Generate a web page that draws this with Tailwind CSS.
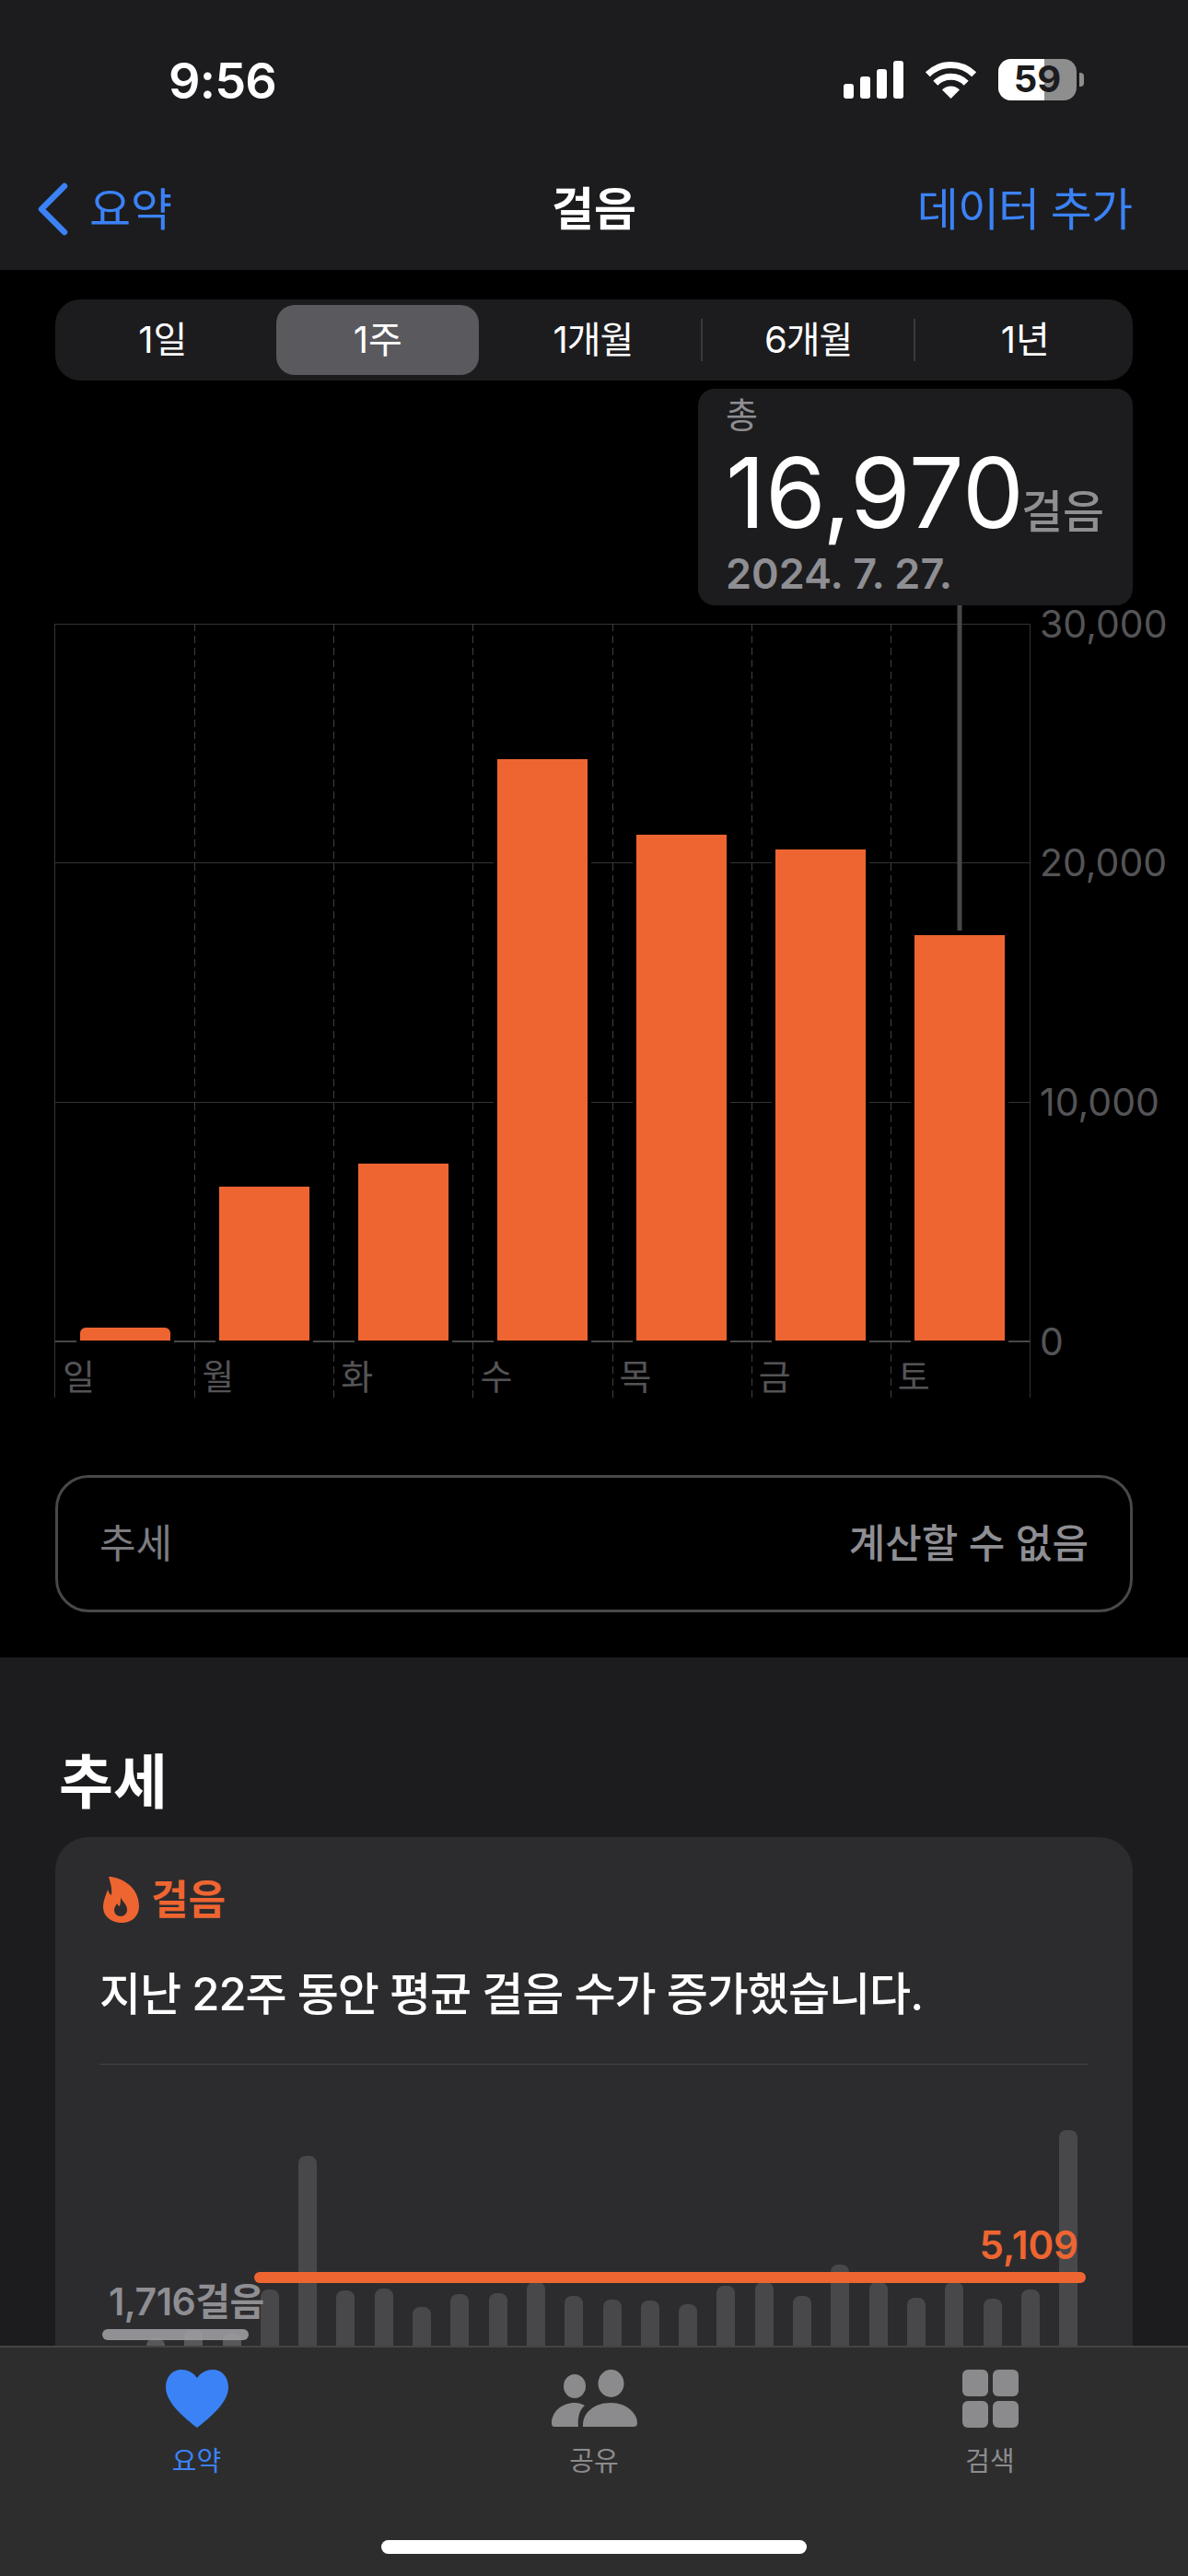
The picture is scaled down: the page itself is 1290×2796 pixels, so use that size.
<!DOCTYPE html>
<html lang="ko">
<head>
  <meta charset="UTF-8">
  <meta name="viewport" content="width=device-width, initial-scale=1.0">
  <title>걸음</title>
  <script src="https://cdn.jsdelivr.net/npm/@tailwindcss/browser@4"></script>
</head>
<body class="bg-black">
<div class="relative w-[1290px] h-[2796px] overflow-hidden bg-[#1c1c1e] text-white font-['Inter','Noto_Sans_CJK_KR',sans-serif]">

  <!-- status + nav -->
  <header class="h-[293px] bg-[#1c1c1e]">
    <div class="h-[172px] flex items-center justify-between pl-[183px] pr-[113px]">
      <span class="pt-[4px] text-[54px] leading-none font-semibold tracking-[-0.8px]">9:56</span>
      <div class="flex items-center">
        <div class="flex items-end gap-[7px] h-[41px]">
          <div class="w-[11px] h-[16px] rounded-[3px] bg-white"></div>
          <div class="w-[11px] h-[24px] rounded-[3px] bg-white"></div>
          <div class="w-[11px] h-[32px] rounded-[3px] bg-white"></div>
          <div class="w-[11px] h-[41px] rounded-[3px] bg-white"></div>
        </div>
        <svg class="ml-[23px]" width="57" height="42" viewBox="0 0 57 42" fill="none">
          <path d="M3.3 15.8A36 36 0 0 1 53.7 15.8" stroke="#fff" stroke-width="7"/>
          <path d="M11.8 25.3A23.5 23.5 0 0 1 45.2 25.3" stroke="#fff" stroke-width="7"/>
          <path d="M28.5 42L19 32.5A13.4 13.4 0 0 1 38 32.5Z" fill="#fff"/>
        </svg>
        <div class="relative ml-[23px] w-[85px] h-[45px] rounded-[14px] bg-[#8e8e8e] flex items-center justify-center">
          <div class="absolute left-0 top-0 bottom-0 w-[50px] rounded-l-[14px] bg-white"></div>
          <span class="relative text-[40px] leading-none font-bold text-[#1c1c1e]">59</span>
        </div>
        <div class="ml-[3px] w-[5px] h-[15px] rounded-r-[4px] bg-[#8e8e8e]"></div>
      </div>
    </div>
    <nav class="relative h-[110px] flex items-center justify-center">
      <div class="absolute left-[39px] top-0 h-full flex items-center text-[#3b82f6]">
        <svg width="36" height="60" viewBox="0 0 36 60" fill="none">
          <path d="M31 5L6 30L31 55" stroke="#3b82f6" stroke-width="6.5" stroke-linecap="round" stroke-linejoin="round"/>
        </svg>
        <span class="ml-[22px] text-[49px] leading-none">요약</span>
      </div>
      <span class="text-[50px] leading-none font-semibold">걸음</span>
      <span class="absolute right-[61px] text-[49px] leading-none tracking-[-1px] text-[#3b82f6]">데이터 추가</span>
    </nav>
  </header>

  <main class="bg-black pt-[32px] pb-[49px]">
    <!-- range picker -->
    <div class="relative mx-[60px] h-[88px] pr-[2px] rounded-[27px] bg-[#1c1c1e] grid grid-cols-5 items-center text-[40px] leading-none">
      <div class="flex justify-center">1일</div>
      <div class="flex justify-center"><div class="w-[220px] h-[76px] rounded-[20px] bg-[#5a5a5e] flex items-center justify-center">1주</div></div>
      <div class="flex justify-center tracking-[-1px]">1개월</div>
      <div class="flex justify-center relative tracking-[-1px]">6개월<div class="absolute left-0 top-[-3px] h-[46px] w-[2px] bg-[#3a3a3c]"></div><div class="absolute right-0 top-[-3px] h-[46px] w-[2px] bg-[#3a3a3c]"></div></div>
      <div class="flex justify-center pl-[4px]">1년</div>
    </div>

    <!-- selected value -->
    <div class="ml-[758px] mt-[9px] w-[472px] h-[235px] rounded-[18px] bg-[#1c1c1e] pl-[30px] pt-[6px]">
      <div class="text-[38px] leading-[44px] text-[#8e8e93]">총</div>
      <div class="flex items-baseline h-[118px] mt-[4px]">
        <span class="text-[106px] leading-[118px]">16,970</span>
        <span class="-ml-[3px] text-[49px] leading-none font-medium text-[#8e8e93]">걸음</span>
      </div>
      <div class="mt-[3px] text-[45px] leading-[52px] font-semibold text-[#8e8e93]">2024. 7. 27.</div>
    </div>

    <!-- chart -->
    <div class="relative ml-[60px] mt-[20px] w-[1058px]">
      <div class="absolute left-0 top-0 w-full h-[779px]">
        <div class="relative h-[259.33px] border-t border-[#333335]"><span class="absolute left-[1069px] top-[-25px] text-[41px] leading-[48px] text-[#545456]">30,000</span></div>
        <div class="relative h-[259.33px] border-t border-[#333335]"><span class="absolute left-[1069px] top-[-25px] text-[41px] leading-[48px] text-[#545456]">20,000</span></div>
        <div class="relative h-[259.33px] border-t border-[#333335]"><span class="absolute left-[1069px] top-[-25px] text-[41px] leading-[48px] text-[#545456]">10,000</span></div>
        <div class="relative border-t-2 border-[#48484a]"><span class="absolute left-[1069px] top-[-25px] text-[41px] leading-[48px] text-[#545456]">0</span></div>
      </div>
      <div class="relative -mx-px grid grid-cols-7 h-[840px] border-x border-[#333335]">
        <div class="relative">
          <div class="h-[778px] flex items-end justify-center"><div class="w-[98px] h-[14px] rounded-t-[6px] bg-[#ee6531] shadow-[0_0_0_4px_#000]"></div></div>
          <div class="pl-[8px] pt-[16px] text-[38px] leading-[46px] text-[#545456]">일</div>
        </div>
        <div class="relative">
          <div class="absolute left-0 inset-y-0 w-px bg-[repeating-linear-gradient(to_bottom,#404042_0_8px,transparent_8px_13px)]"></div>
          <div class="h-[778px] flex items-end justify-center"><div class="w-[98px] h-[167px] bg-[#ee6531] shadow-[0_0_0_4px_#000]"></div></div>
          <div class="pl-[8px] pt-[16px] text-[38px] leading-[46px] text-[#545456]">월</div>
        </div>
        <div class="relative">
          <div class="absolute left-0 inset-y-0 w-px bg-[repeating-linear-gradient(to_bottom,#404042_0_8px,transparent_8px_13px)]"></div>
          <div class="h-[778px] flex items-end justify-center"><div class="w-[98px] h-[192px] bg-[#ee6531] shadow-[0_0_0_4px_#000]"></div></div>
          <div class="pl-[8px] pt-[16px] text-[38px] leading-[46px] text-[#545456]">화</div>
        </div>
        <div class="relative">
          <div class="absolute left-0 inset-y-0 w-px bg-[repeating-linear-gradient(to_bottom,#404042_0_8px,transparent_8px_13px)]"></div>
          <div class="h-[778px] flex items-end justify-center"><div class="w-[98px] h-[631px] bg-[#ee6531] shadow-[0_0_0_4px_#000]"></div></div>
          <div class="pl-[8px] pt-[16px] text-[38px] leading-[46px] text-[#545456]">수</div>
        </div>
        <div class="relative">
          <div class="absolute left-0 inset-y-0 w-px bg-[repeating-linear-gradient(to_bottom,#404042_0_8px,transparent_8px_13px)]"></div>
          <div class="h-[778px] flex items-end justify-center"><div class="w-[98px] h-[549px] bg-[#ee6531] shadow-[0_0_0_4px_#000]"></div></div>
          <div class="pl-[8px] pt-[16px] text-[38px] leading-[46px] text-[#545456]">목</div>
        </div>
        <div class="relative">
          <div class="absolute left-0 inset-y-0 w-px bg-[repeating-linear-gradient(to_bottom,#404042_0_8px,transparent_8px_13px)]"></div>
          <div class="h-[778px] flex items-end justify-center"><div class="w-[98px] h-[533px] bg-[#ee6531] shadow-[0_0_0_4px_#000]"></div></div>
          <div class="pl-[8px] pt-[16px] text-[38px] leading-[46px] text-[#545456]">금</div>
        </div>
        <div class="relative">
          <div class="absolute left-0 inset-y-0 w-px bg-[repeating-linear-gradient(to_bottom,#404042_0_8px,transparent_8px_13px)]"></div>
          <div class="h-[778px] flex items-end justify-center"><div class="w-[98px] h-[440px] bg-[#ee6531] shadow-[0_0_0_4px_#000]"></div></div>
          <div class="pl-[8px] pt-[16px] text-[38px] leading-[46px] text-[#545456]">토</div>
          <div class="absolute left-1/2 -translate-x-1/2 top-[-20px] w-[5px] h-[353px] bg-[#48484a]"></div>
        </div>
      </div>
    </div>

    <!-- trend status -->
    <div class="mx-[60px] mt-[84px] h-[149px] rounded-[36px] border-[3px] border-[#48484a] flex items-center justify-between px-[45px] text-[43px] leading-none text-[#8e8e93]">
      <span class="text-[#7c7c80]">추세</span>
      <span class="font-medium">계산할 수 없음</span>
    </div>
  </main>

  <!-- trends -->
  <section class="pt-[95px]">
    <h2 class="pl-[64px] text-[64px] leading-[80px] font-bold">추세</h2>
    <div class="mx-[60px] mt-[20px] h-[900px] rounded-[36px] bg-[#2c2c2e] px-[48px] pt-[43px]">
      <div class="flex items-center h-[50px] ml-[4px]">
        <svg width="39" height="50" viewBox="0 0 39 50">
          <path fill="#ee6531" fill-rule="evenodd" d="M6 0C18 0 39 10 39 32C39 43 31 50 20 50C9 50 0 43 0 33C0 26 3 20 5 14C6 17 7 19 9 20C10 13 8 7 6 0ZM19 22C20 27 26 29 26 36C26 40 23 43 19 43C15 43 12 40 12 36C12 33 14 31 15 29C16 31 17 32 18 32C19 29 19 25 19 22Z"/>
        </svg>
        <span class="ml-[13px] text-[44px] leading-none font-bold text-[#ee6531]">걸음</span>
      </div>
      <p class="mt-[48px] h-[60px] text-[49px] leading-[60px] tracking-[-1px] font-medium whitespace-nowrap">지난 22주 동안 평균 걸음 수가 증가했습니다.</p>
      <div class="mt-[45px] h-px bg-[#424244]"></div>

      <div class="relative h-[305px]">
        <div class="h-full pl-[51px] flex items-end gap-[21.3px]">
          <div class="w-[20px] h-[8px] rounded-t-[8px] bg-[#58585a]"></div>
          <div class="w-[20px] h-[17px] rounded-t-[8px] bg-[#58585a]"></div>
          <div class="w-[20px] h-[13px] rounded-t-[8px] bg-[#58585a]"></div>
          <div class="w-[20px] h-[61px] rounded-t-[8px] bg-[#48484a]"></div>
          <div class="w-[20px] h-[206px] rounded-t-[8px] bg-[#48484a]"></div>
          <div class="w-[20px] h-[60px] rounded-t-[8px] bg-[#48484a]"></div>
          <div class="w-[20px] h-[62px] rounded-t-[8px] bg-[#48484a]"></div>
          <div class="w-[20px] h-[42px] rounded-t-[8px] bg-[#48484a]"></div>
          <div class="w-[20px] h-[56px] rounded-t-[8px] bg-[#48484a]"></div>
          <div class="w-[20px] h-[57px] rounded-t-[8px] bg-[#48484a]"></div>
          <div class="w-[20px] h-[69px] rounded-t-[8px] bg-[#48484a]"></div>
          <div class="w-[20px] h-[54px] rounded-t-[8px] bg-[#48484a]"></div>
          <div class="w-[20px] h-[50px] rounded-t-[8px] bg-[#48484a]"></div>
          <div class="w-[20px] h-[49px] rounded-t-[8px] bg-[#48484a]"></div>
          <div class="w-[20px] h-[45px] rounded-t-[8px] bg-[#48484a]"></div>
          <div class="w-[20px] h-[65px] rounded-t-[8px] bg-[#48484a]"></div>
          <div class="w-[20px] h-[69px] rounded-t-[8px] bg-[#48484a]"></div>
          <div class="w-[20px] h-[54px] rounded-t-[8px] bg-[#48484a]"></div>
          <div class="w-[20px] h-[88px] rounded-t-[8px] bg-[#48484a]"></div>
          <div class="w-[20px] h-[69px] rounded-t-[8px] bg-[#48484a]"></div>
          <div class="w-[20px] h-[52px] rounded-t-[8px] bg-[#48484a]"></div>
          <div class="w-[20px] h-[69px] rounded-t-[8px] bg-[#48484a]"></div>
          <div class="w-[20px] h-[51px] rounded-t-[8px] bg-[#48484a]"></div>
          <div class="w-[20px] h-[61px] rounded-t-[8px] bg-[#48484a]"></div>
          <div class="w-[20px] h-[234px] rounded-t-[8px] bg-[#48484a]"></div>
        </div>
        <span class="absolute left-[10px] top-[233px] text-[41px] leading-[48px] font-semibold tracking-[-0.5px] text-[#8e8e93]">1,716걸음</span>
        <div class="absolute left-[3px] top-[287px] w-[159px] h-[12px] rounded-full bg-[#9c9ca1]/90"></div>
        <span class="absolute right-[11px] top-[172px] text-[42px] leading-[48px] font-semibold text-[#ee6531]">5,109</span>
        <div class="absolute left-[168px] top-[225px] w-[903px] h-[12px] rounded-full bg-[#ee6531]"></div>
      </div>
    </div>
  </section>

  <!-- tab bar -->
  <footer class="absolute left-0 right-0 bottom-0 h-[250px] bg-[#2d2d2d] border-t-2 border-[#444446]">
    <div class="grid grid-cols-3 pt-[24px]">
      <div class="flex flex-col items-center pr-[3px] text-[#3b82f6]">
        <svg width="68" height="63" viewBox="0 0 68 63">
          <path fill="#3b82f6" d="M34 9C30 3 23 0 17 0C7 0 0 8 0 19C0 36 20 52 34 63C48 52 68 36 68 19C68 8 61 0 51 0C45 0 38 3 34 9Z"/>
        </svg>
        <span class="mt-[19px] text-[29px] leading-[36px]">요약</span>
      </div>
      <div class="flex flex-col items-center text-[#8b8b8d]">
        <svg width="93" height="63" viewBox="0 0 93 63" fill="#8b8b8d">
          <ellipse cx="25" cy="18" rx="12" ry="13"/>
          <ellipse cx="64.5" cy="15" rx="14" ry="15"/>
          <path d="M34 62C33 47 46 36 64 36C82 36 93 48 93 58C93 61 91 62 89 62Z"/>
          <path d="M0 58C0 46 11 36 25 36C29 36 33 37 36 39C30 44 28 52 29 62L4 62C1 62 0 61 0 58Z"/>
        </svg>
        <span class="mt-[19px] text-[29px] leading-[36px]">공유</span>
      </div>
      <div class="flex flex-col items-center text-[#8b8b8d]">
        <div class="grid grid-cols-2 gap-[5px] w-[61px] h-[63px]">
          <div class="rounded-[6px] bg-[#8b8b8d]"></div>
          <div class="rounded-[6px] bg-[#8b8b8d]"></div>
          <div class="rounded-[6px] bg-[#8b8b8d]"></div>
          <div class="rounded-[6px] bg-[#8b8b8d]"></div>
        </div>
        <span class="mt-[19px] text-[29px] leading-[36px]">검색</span>
      </div>
    </div>
    <div class="absolute left-[414px] bottom-[24px] w-[462px] h-[15px] rounded-full bg-white"></div>
  </footer>
</div>
</body>
</html>
